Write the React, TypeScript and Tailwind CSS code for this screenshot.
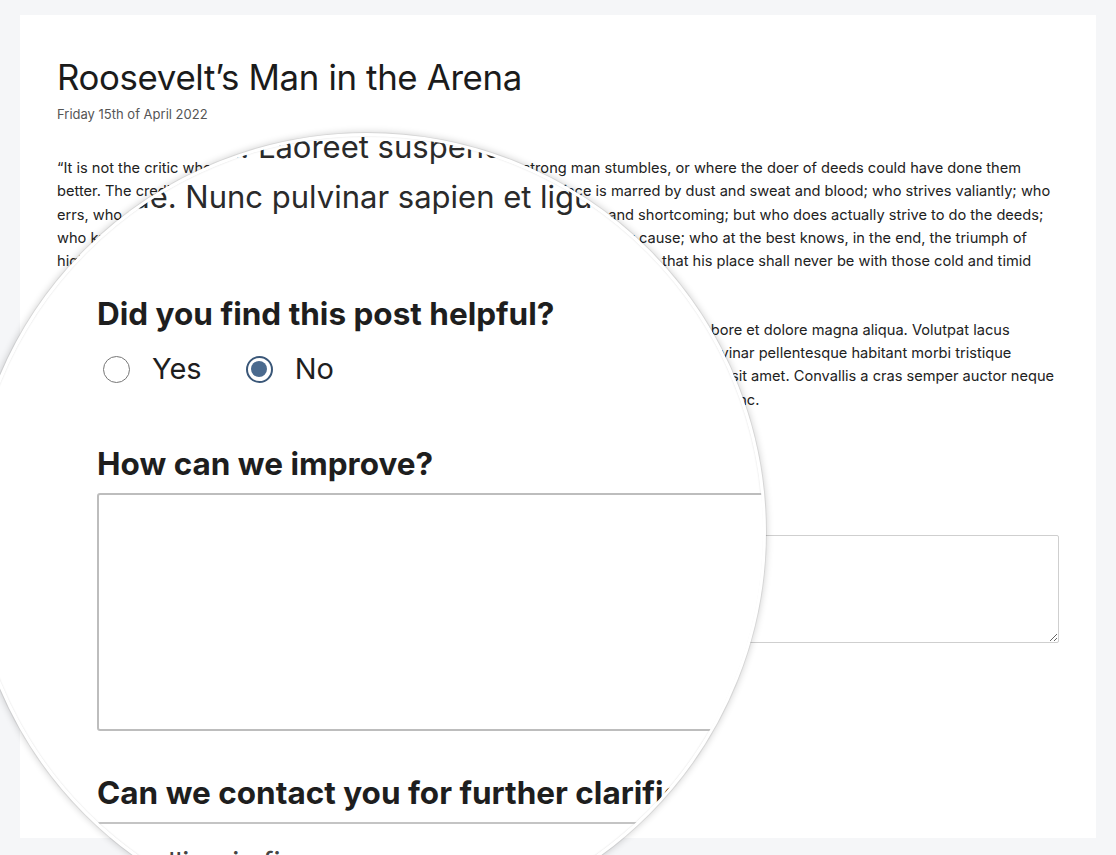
import React from "react";

const para1 = [
  "“It is not the critic who counts; not the man who points out how the strong man stumbles, or where the doer of deeds could have done them",
  "better. The credit belongs to the man who is actually in the arena, whose face is marred by dust and sweat and blood; who strives valiantly; who",
  "errs, who comes short again and again, because there is no effort without error and shortcoming; but who does actually strive to do the deeds;",
  "who knows great enthusiasms, the great devotions; who spends himself in a worthy cause; who at the best knows, in the end, the triumph of",
  "high achievement, and who at the worst, if he fails, at least fails while daring greatly, so that his place shall never be with those cold and timid",
  "souls who neither know victory nor defeat.”",
];

const para2 = [
  "Lorem ipsum dolor sit amet, consectetur adipiscing elit, sed do eiusmod tempor incididunt ut labore et dolore magna aliqua. Volutpat lacus",
  "laoreet non curabitur gravida arcu ac tortor. Nunc pulvinar sapien et ligula ullamcorper proin. Pulvinar pellentesque habitant morbi tristique",
  "senectus et netus et malesuada fames ac turpis. Consectetur adipiscing elit sed ut aliquam purus sit amet. Convallis a cras semper auctor neque",
  "vitae tempus quam pellentesque nec nam aliquam sem et tortor consequat porta nibh venenatis nunc.",
];

function Lines({ lines }: { lines: string[] }) {
  return (
    <>
      {lines.map((l, i) => (
        <React.Fragment key={i}>
          {l}
          {i < lines.length - 1 && <br />}
        </React.Fragment>
      ))}
    </>
  );
}

function Radio({ checked, size }: { checked?: boolean; size: "sm" | "lg" }) {
  if (size === "sm") {
    return checked ? (
      <span className="flex h-[13px] w-[13px] items-center justify-center rounded-full border border-[#3c5a7d] bg-white">
        <span className="h-[7px] w-[7px] rounded-full bg-[#4a6a8e]" />
      </span>
    ) : (
      <span className="h-[13px] w-[13px] rounded-full border border-[#767676] bg-white" />
    );
  }
  return checked ? (
    <span className="flex h-[27px] w-[27px] items-center justify-center rounded-full border-[2px] border-[#3a5778] bg-white">
      <span className="h-[16px] w-[16px] rounded-full bg-[#4a6a8e]" />
    </span>
  ) : (
    <span className="h-[27px] w-[27px] rounded-full border-[1.5px] border-[#767676] bg-white" />
  );
}

export default function App() {
  return (
    <div className="relative h-[855px] w-full overflow-hidden bg-[#f5f6f8] font-['Inter',sans-serif]">
      {/* Page card */}
      <div className="mx-[20px] mt-[15px] h-[823px] bg-white pl-[37px] pr-[37px] pt-[40px]">
        <h1 className="text-[34.8px] font-normal leading-[44px] tracking-[-0.01em] text-[#1b1b1b]">
          Roosevelt’s Man in the Arena
        </h1>
        <p className="mt-[5px] text-[13px] leading-[20px] text-[#555]">Friday 15th of April 2022</p>
        <p className="mt-[33px] whitespace-nowrap text-[14.62px] leading-[23.3px] text-[#222]">
          <Lines lines={para1} />
        </p>
        <p className="mt-[22px] whitespace-nowrap text-[14.62px] leading-[23.3px] text-[#222]">
          <Lines lines={para2} />
        </p>

        <form className="mt-[33px]">
          <p className="text-[13px] font-bold leading-[18px] text-[#222]">Did you find this post helpful?</p>
          <div className="mt-[7px] flex items-center gap-[16px] text-[13px] leading-[18px] text-[#222]">
            <label className="flex items-center gap-[8px]">
              <Radio size="sm" />
              Yes
            </label>
            <label className="flex items-center gap-[8px]">
              <Radio size="sm" checked />
              No
            </label>
          </div>
          <p className="mt-[25px] text-[13px] font-bold leading-[18px] text-[#222]">How can we improve?</p>
          <textarea
            className="mt-[4px] block h-[108px] w-full rounded-[2px] border border-[#cfcfcf] bg-white"
            aria-label="How can we improve?"
          />
        </form>
      </div>

      {/* Magnifier */}
      <div className="absolute left-[-32px] top-[133px] h-[798px] w-[798px] overflow-hidden rounded-full border-[3px] border-white bg-white shadow-[0_0_0_1px_rgba(0,0,0,0.07),0_0_7px_1px_rgba(0,0,0,0.18),inset_0_0_2px_rgba(0,0,0,0.15)]">
        <div className="pl-[126px] pt-0 text-[#222]">
          <div className="-mt-[14px] whitespace-nowrap text-[31px] leading-[50px] text-[#2a2a2a]">
            Lectus eu. Laoreet suspendisse interdum consectetur
          </div>
          <div className="whitespace-nowrap text-[31px] leading-[50px] text-[#2a2a2a]">
            vitae. Nunc pulvinar sapien et ligula ullamcorper
          </div>
          <div className="mt-[72px] whitespace-nowrap text-[31.5px] font-bold leading-[40px] text-[#1e1e1e]">
            Did you find this post helpful?
          </div>
          <div className="mt-[15px] flex h-[40px] items-center gap-[44px] text-[29px] leading-[40px] text-[#1e1e1e]">
            <span className="flex items-center gap-[22px] pl-[6px]">
              <Radio size="lg" />
              Yes
            </span>
            <span className="flex items-center gap-[22px]">
              <Radio size="lg" checked />
              No
            </span>
          </div>
          <div className="mt-[55px] whitespace-nowrap text-[31.5px] font-bold leading-[40px] text-[#1e1e1e]">
            How can we improve?
          </div>
          <div className="mt-[9px] h-[238px] w-[900px] rounded-[3px] border-[2px] border-[#bdbdbd] bg-white" />
          <div className="mt-[42px] whitespace-nowrap text-[31.5px] font-bold leading-[40px] text-[#1e1e1e]">
            Can we contact you for further clarification?
          </div>
          <div className="mt-[9px] h-[90px] w-[900px] rounded-[3px] border-t-[2px] border-[#c4c4c4] pl-[38px] pt-[19px] text-[29px] leading-[40px] text-[#444]">
            calling is fine
          </div>
        </div>
      </div>
    </div>
  );
}
